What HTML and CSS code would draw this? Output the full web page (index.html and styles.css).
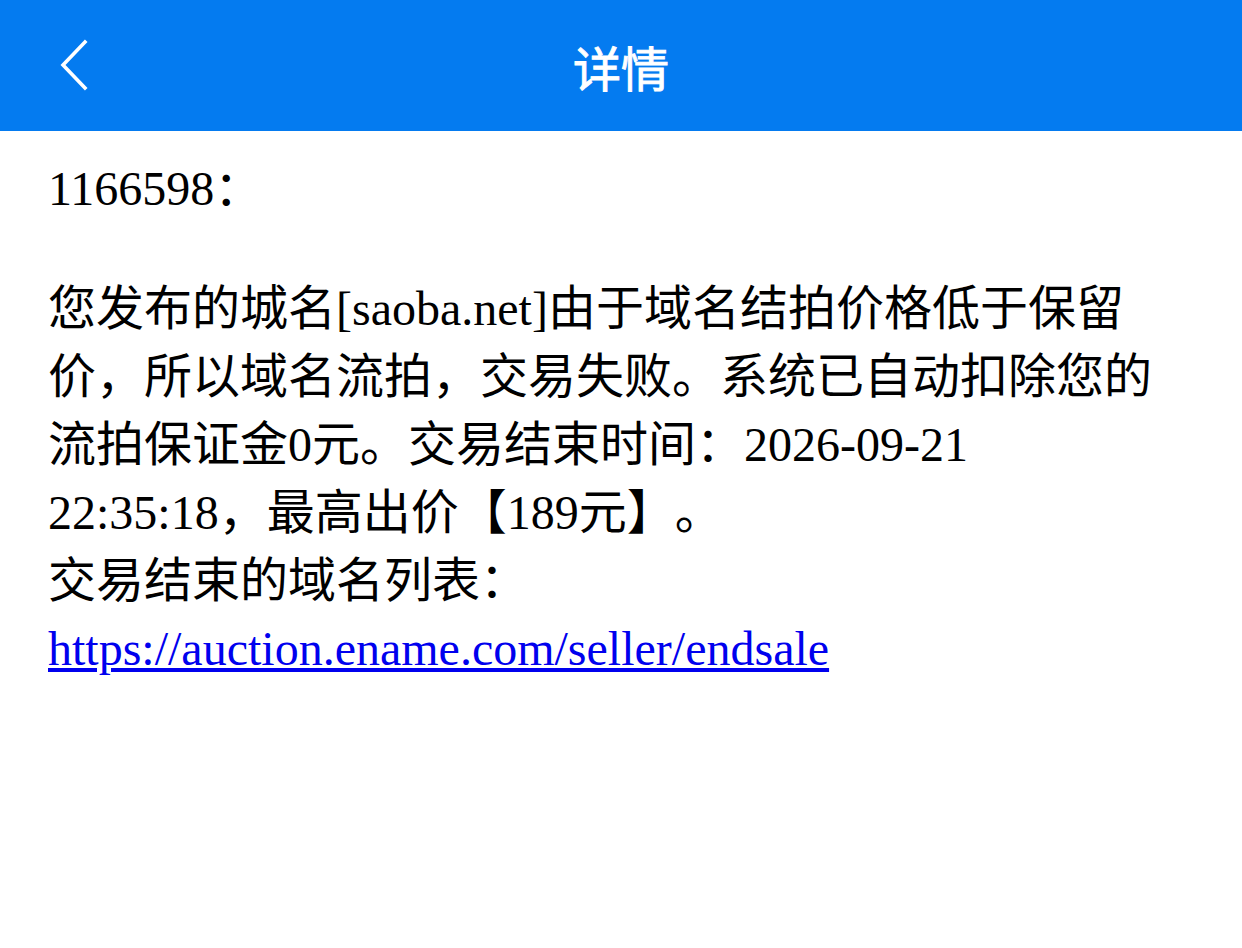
FILE: index.html
```html
<!DOCTYPE html>
<html lang="zh-CN">
<head>
<meta charset="utf-8">
<title>详情</title>
<link rel="stylesheet" href="styles.css">
</head>
<body>
<header class="topbar">
  <div class="topbar-left">
    <a class="back" href="#" aria-label="返回">
      <svg class="back-icon" viewBox="0 0 34 54" width="34" height="54">
        <polyline points="28,4 6,27 28,50" fill="none" stroke="#ffffff" stroke-width="3.6" stroke-linecap="square" stroke-linejoin="miter"/>
      </svg>
    </a>
  </div>
  <h1 class="title">详情</h1>
  <div class="topbar-right"></div>
</header>
<main class="content">
  <p class="greeting">1166598：</p>
  <p class="message">您发布的城名[saoba.net]由于域名结拍价格低于保留价，所以域名流拍，交易失败。系统已自动扣除您的流拍保证金0元。交易结束时间：2026-09-21 22:35:18，最高出价【189元】。<br>交易结束的域名列表：<br><a class="link" href="#">https://auction.ename.com/seller/endsale</a></p>
</main>
</body>
</html>
```

FILE: styles.css
```css
html, body {
  margin: 0;
  padding: 0;
  background: #ffffff;
}

body {
  font-family: "Liberation Serif", "Noto Sans CJK SC", serif;
  color: #000000;
  text-spacing-trim: space-all;
}

.topbar {
  height: 131px;
  background: #047bf0;
  display: grid;
  grid-template-columns: 1fr auto 1fr;
  align-items: center;
}

.topbar-left {
  display: flex;
  align-items: center;
  padding-left: 57px;
}

.back {
  display: flex;
  width: 34px;
  height: 54px;
  margin-top: -2px;
}

.back-icon {
  display: block;
}

.title {
  margin: 0;
  font-family: "Noto Sans CJK SC", "Noto Sans", sans-serif;
  font-size: 48px;
  font-weight: 400;
  color: #ffffff;
  line-height: 1;
  letter-spacing: 0;
  -webkit-text-stroke: 0.9px #ffffff;
}

.content {
  padding: 24px 48px 0 48px;
  font-size: 48px;
  line-height: 68px;
}

.greeting {
  margin: 0 0 52px 0;
}

.message {
  margin: 0;
}

.link {
  color: #0000ee;
  text-decoration: underline;
}
```
